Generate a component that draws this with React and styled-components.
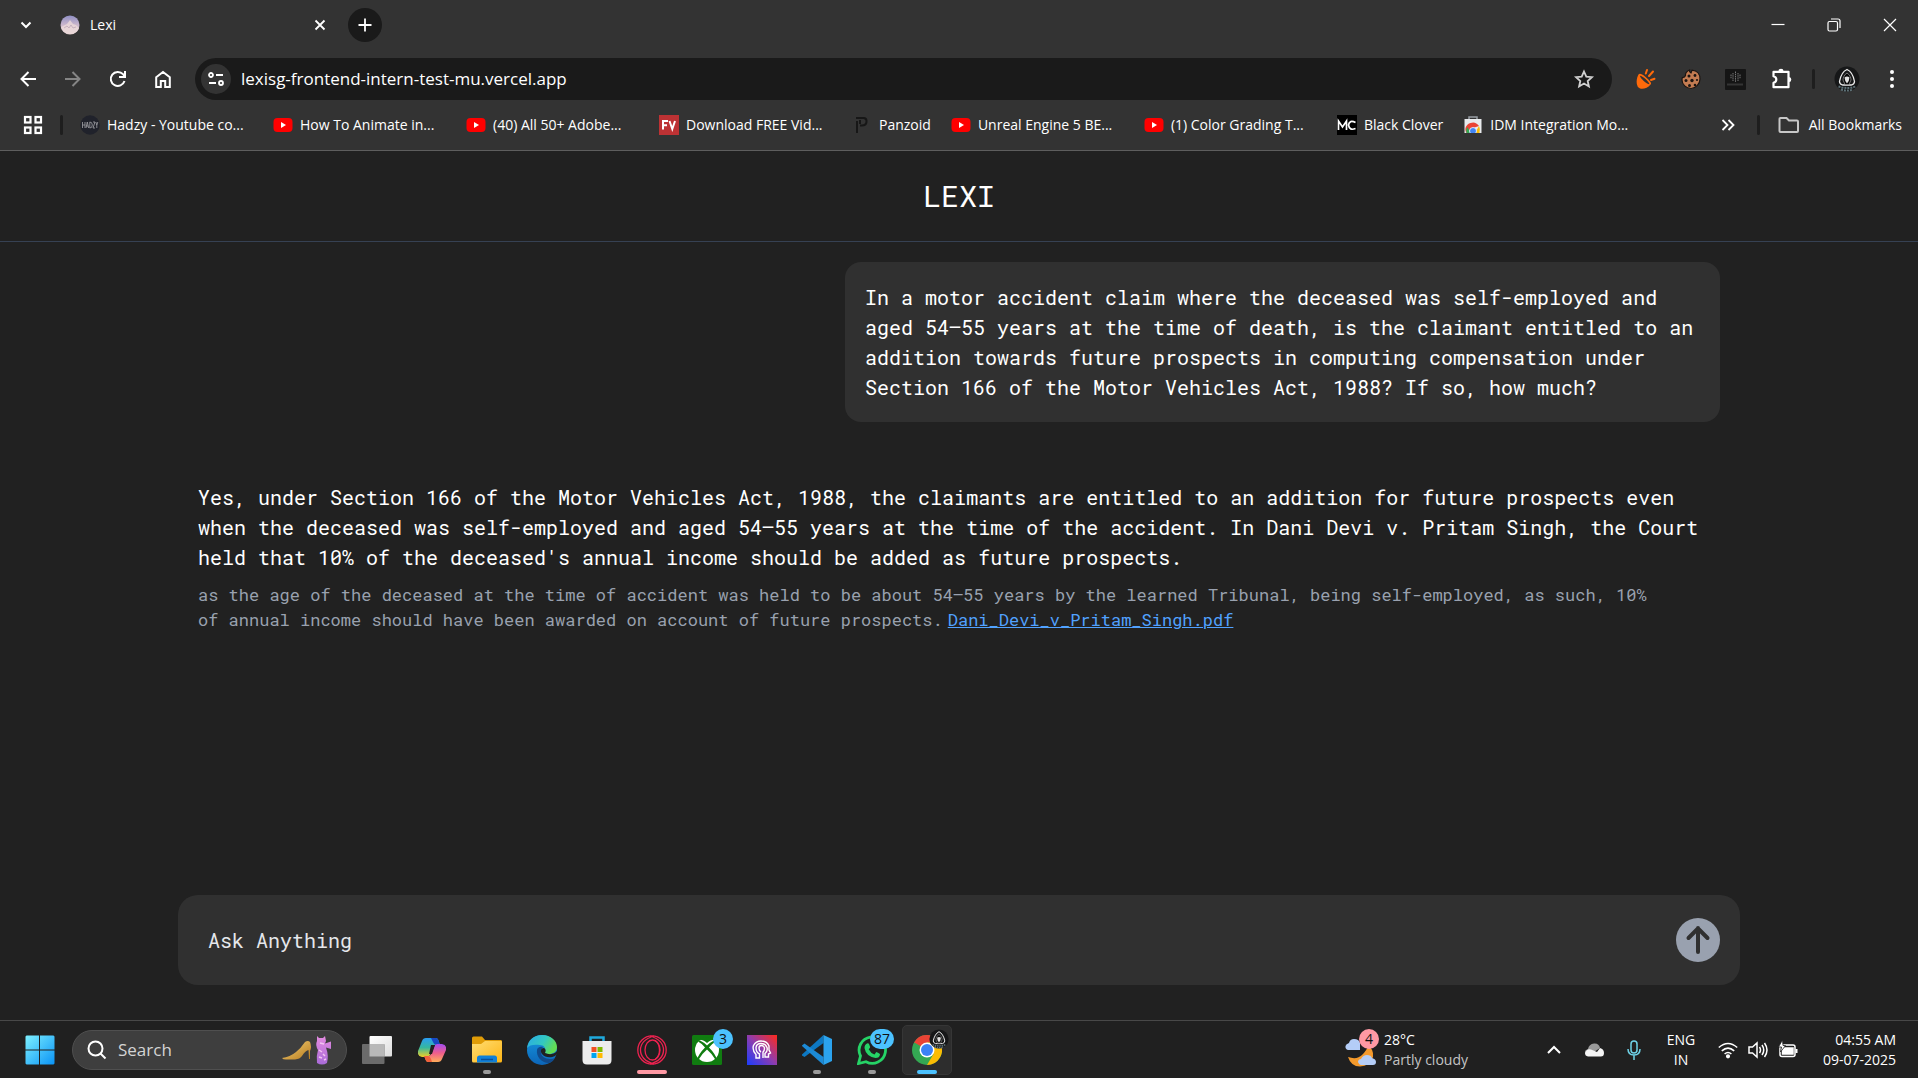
import React from "react";
import styled, { createGlobalStyle } from "styled-components";

const GlobalStyle = createGlobalStyle`
  *, *::before, *::after { box-sizing: border-box; }
  html, body { margin: 0; padding: 0; background: #212121; }
  button, input { font: inherit; color: inherit; }
`;

const ui = `"Segoe UI", "Open Sans", "Noto Sans", sans-serif`;
const mono = `"Roboto Mono", "DejaVu Sans Mono", "Liberation Mono", monospace`;

const Screen = styled.div`
  display: flex;
  flex-direction: column;
  min-height: 100vh;
  background: #212121;
  color: #fff;
  font-family: ${ui};
  font-size: 14px;
  line-height: 20px;
`;

/* ---------- browser chrome ---------- */

const Browser = styled.header`
  background: #333;
  border-bottom: 1px solid #5e5e5e;
  padding-bottom: 8px;
`;

const IconButton = styled.button`
  display: flex;
  align-items: center;
  justify-content: center;
  flex: none;
  width: ${(p) => p.$w || 45}px;
  height: ${(p) => p.$h || 34}px;
  padding: 0;
  border: 0;
  border-radius: 17px;
  background: ${(p) => p.$bg || "transparent"};
  color: ${(p) => p.$color || "#fff"};
`;

const TabStrip = styled.div`
  display: flex;
  align-items: center;
  height: 50px;
  padding-left: 4px;
`;

const Tab = styled.div`
  display: flex;
  align-items: center;
  gap: 10px;
  width: 300px;
  padding: 0 8px 0 12px;
`;

const TabTitle = styled.span`
  flex: 1;
`;

const WindowControls = styled.div`
  display: flex;
  margin-left: auto;
`;

const Toolbar = styled.div`
  display: flex;
  align-items: center;
  padding: 8px 4px 8px 5px;
`;

const AddressBar = styled.label`
  display: flex;
  align-items: center;
  flex: 1;
  height: 42px;
  margin: 0 11px 0 10px;
  padding: 0 6px;
  border-radius: 21px;
  background: #1a1a1a;
`;

const SiteInfo = styled.span`
  display: flex;
  align-items: center;
  justify-content: center;
  width: 30px;
  height: 30px;
  border-radius: 50%;
  background: #333;
`;

const AddressInput = styled.input`
  flex: 1;
  min-width: 0;
  padding: 0 0 0 10px;
  border: 0;
  outline: 0;
  background: none;
  font-size: 17px;
`;

const Divider = styled.span`
  flex: none;
  width: 3px;
  height: 20px;
  margin: 0 ${(p) => p.$gap}px;
  border-radius: 2px;
  background: #1e1e1e;
`;

const Bookmarks = styled.nav`
  display: flex;
  align-items: center;
  height: 34px;
  padding: 0 16px 0 10px;
`;

const BookmarkList = styled.div`
  display: flex;
  flex: 1;
  gap: 20px;
  margin-left: 12px;
`;

const Bookmark = styled.a`
  display: flex;
  align-items: center;
  gap: 7px;
  color: #fff;
  text-decoration: none;
  white-space: nowrap;
`;

const BookmarkTitle = styled.span`
  min-width: ${(p) => (p.$cut ? "146px" : "0")};
`;

/* ---------- page ---------- */

const Page = styled.main`
  display: flex;
  flex-direction: column;
  flex: 1;
  font-family: ${mono};
`;

const PageHeader = styled.div`
  display: flex;
  justify-content: center;
  padding: 22px 0 23px;
  border-bottom: 1px solid #364153;
`;

const Brand = styled.h1`
  margin: 0;
  font-size: 30px;
  font-weight: 400;
  line-height: 45px;
`;

const Conversation = styled.section`
  display: flex;
  flex-direction: column;
  flex: 1;
  gap: 60px;
  width: 100%;
  max-width: 1562px;
  margin: 0 auto;
  padding: 20px;
  font-size: 20px;
  line-height: 30px;
`;

const Question = styled.p`
  align-self: flex-end;
  max-width: 875px;
  margin: 0;
  padding: 20px;
  border-radius: 16px;
  background: #303030;
`;

const Answer = styled.article`
  display: flex;
  flex-direction: column;
  gap: 10px;
`;

const AnswerText = styled.p`
  margin: 0;
`;

const Citation = styled.p`
  max-width: 144ch;
  margin: 0;
  color: #99a1af;
  font-size: 17px;
  line-height: 25px;
`;

const CitationLink = styled.a`
  margin-left: 5px;
  color: #51a2ff;
  text-decoration: underline;
`;

const Composer = styled.form`
  display: flex;
  align-items: center;
  width: calc(100% - 40px);
  max-width: 1562px;
  height: 90px;
  margin: 0 auto 35px;
  padding: 0 20px 0 30px;
  border-radius: 20px;
  background: #303030;
`;

const Prompt = styled.input`
  flex: 1;
  min-width: 0;
  padding: 0;
  border: 0;
  outline: 0;
  background: none;
  font-size: 20px;
  line-height: 30px;
  &::placeholder { color: #e5e7eb; opacity: 1; }
`;

const SendButton = styled.button`
  display: flex;
  padding: 0;
  border: 0;
  border-radius: 50%;
  background: #99a1af;
`;

/* ---------- taskbar ---------- */

const Taskbar = styled.footer`
  display: flex;
  align-items: center;
  height: 58px;
  padding: 0 22px 0 15px;
  border-top: 1px solid #484848;
  background: #202020;
`;

const SearchBox = styled.label`
  display: flex;
  align-items: center;
  width: 275px;
  height: 40px;
  margin: 0 5px 0 7px;
  padding: 0 14px;
  border: 1px solid #4f4f4f;
  border-radius: 20px;
  background: #3e3e3e;
`;

const SearchInput = styled.input`
  flex: 1;
  min-width: 0;
  padding: 0 0 0 11px;
  border: 0;
  outline: 0;
  background: none;
  font-size: 17px;
  &::placeholder { color: #d4d4d4; opacity: 1; }
`;

const Apps = styled.div`
  display: flex;
  gap: 5px;
`;

const AppButton = styled.button`
  position: relative;
  display: flex;
  align-items: center;
  justify-content: center;
  width: 50px;
  height: 50px;
  padding: 0;
  border: 1px solid ${(p) => (p.$active ? "#363636" : "transparent")};
  border-radius: 5px;
  background: ${(p) => (p.$active ? "#2d2d2d" : "transparent")};
`;

const RunMark = styled.span`
  position: absolute;
  bottom: 0;
  left: 50%;
  width: ${(p) => p.$w}px;
  height: 4px;
  border-radius: 2px;
  background: ${(p) => p.$color};
  transform: translateX(-50%);
`;

const Badge = styled.span`
  position: absolute;
  top: ${(p) => p.$y || 3}px;
  left: ${(p) => p.$x}px;
  min-width: 20px;
  height: 20px;
  padding: 0 4px;
  border-radius: 10px;
  background: ${(p) => p.$bg || "#4cc2ff"};
  color: #111;
  font-size: 14px;
  line-height: 20px;
  text-align: center;
`;

const Weather = styled.button`
  position: relative;
  display: flex;
  align-items: center;
  gap: 5px;
  margin-left: auto;
  padding: 0;
  border: 0;
  background: none;
  text-align: left;
`;

const Stack = styled.span`
  display: flex;
  flex-direction: column;
  align-items: ${(p) => p.$align || "flex-start"};
  line-height: 20px;
  white-space: nowrap;
`;

const Muted = styled.span`
  color: #c4c4c4;
`;

const Tray = styled.div`
  display: flex;
  align-items: center;
  margin-left: 66px;
`;

const Language = styled.button`
  width: 54px;
  padding: 0;
  border: 0;
  background: none;
`;

const QuickSettings = styled.button`
  display: flex;
  gap: 10px;
  margin: 0 0 0 10px;
  padding: 0;
  border: 0;
  background: none;
`;

const Clock = styled.button`
  min-width: 98px;
  padding: 0;
  border: 0;
  background: none;
`;

/* ---------- drawings ---------- */

const Ico = ({ s = 20, h, vb = "0 0 24 24", w = 2, children }) => (
  <svg width={s} height={h || s} viewBox={vb} fill="none" stroke="currentColor" strokeWidth={w} aria-hidden="true">
    {children}
  </svg>
);

const YouTube = () => (
  <svg width="20" height="20" viewBox="0 0 20 20" aria-hidden="true">
    <rect x="0.5" y="3" width="19" height="14" rx="4" fill="#f00" />
    <path d="M8 7l5 3-5 3z" fill="#fff" />
  </svg>
);
const Hadzy = () => (
  <svg width="20" height="20" viewBox="0 0 20 20" aria-hidden="true">
    <circle cx="10" cy="10" r="9.7" fill="#20222b" />
    <g stroke="#a3a3a8" strokeWidth="0.8" fill="none">
      <path d="M2.500 7v6M5 7v6M2.500 10H5M6 13l1.300-6 1.300 6M6.500 11h1.700M9.800 7v6q2.500 0 2.500-3t-2.500-3M13 7h2l-2 6h2M15.800 7l1 3 1-3M16.800 10v3" />
    </g>
  </svg>
);
const Fv = () => (
  <svg width="20" height="20" viewBox="0 0 20 20" aria-hidden="true">
    <rect width="20" height="20" fill="#bd3234" />
    <path d="M4 14.500V6h5M4 10.200h4M10.500 6l2.800 8L16 6" stroke="#fff" strokeWidth="2" fill="none" />
  </svg>
);
const Panzoid = () => (
  <svg width="20" height="20" viewBox="0 0 20 20" aria-hidden="true">
    <path d="M5 18V6M4 3h8q3 .5 2.500 4T10 10.500H8M8 5v4" stroke="#171717" strokeWidth="2" fill="none" />
  </svg>
);
const Mc = () => (
  <svg width="20" height="20" viewBox="0 0 20 20" aria-hidden="true">
    <rect width="20" height="20" fill="#000" />
    <path d="M1.500 15V6l4 6 4-6v9M18.500 7.500q-6-3-7 2.500 1 6 7 3.500" stroke="#fff" strokeWidth="1.700" fill="none" />
  </svg>
);
const WebStore = () => (
  <svg width="20" height="20" viewBox="0 0 20 20" aria-hidden="true">
    <path d="M6 4V2h8v2" stroke="#9aa0a6" strokeWidth="1.500" fill="none" />
    <path d="M1.500 4h17v14h-17z" fill="#e8eaed" />
    <path d="M3.500 18a6.500 6.500 0 0 1 4-10q5-2 8.500 3l-6 2z" fill="#ea4335" />
    <path d="M3.500 18q-1-3 .7-6l4 6z" fill="#34a853" />
    <path d="M16 11q1.500 3 .5 7H12z" fill="#fbbc04" />
    <circle cx="10" cy="16" r="3.500" fill="#4285f4" stroke="#fff" strokeWidth=".8" />
    <rect x="2" y="18" width="16" height="2" fill="#333" />
  </svg>
);
const Hood = ({ s = 26 }) => (
  <svg width={s} height={s} viewBox="0 0 26 26" aria-hidden="true">
    <circle cx="13" cy="13" r="12.500" fill="#161718" />
    <path d="M13 3.500C9.500 5 6.500 10 5.500 15.500q0 2.500 3 3.500h9q3-1 3-3.500C19.500 10 16.500 5 13 3.500z" fill="none" stroke="#ececec" strokeWidth="1.300" />
    <path d="M13 7c-2.500 1.500-4 4.500-4 7l2 4.500h4l2-4.500c0-2.500-1.500-5.500-4-7z" fill="#050505" stroke="#8d8d8d" strokeWidth=".8" />
    <path d="M10.500 11.500q2.500-2 5 0l-.8 3.500-1.700 2.500-1.700-2.500z" fill="#e2e2e2" />
    <path d="M4.500 20.500q8.500 3 17 0M7 23.500q6 2 12 0" stroke="#5f7278" strokeWidth="2" strokeDasharray="2 1" fill="none" />
  </svg>
);
const LexiFavicon = () => (
  <svg width="20" height="20" viewBox="0 0 20 20" aria-hidden="true">
    <defs>
      <linearGradient id="sky" x1="0" y1="0" x2="0" y2="1">
        <stop offset="0" stopColor="#8f8fc4" />
        <stop offset=".5" stopColor="#cbb6cc" />
        <stop offset="1" stopColor="#e6d3d3" />
      </linearGradient>
    </defs>
    <circle cx="10" cy="10" r="9.500" fill="url(#sky)" />
    <path d="M1 12l4-2 2-1 3-4 3 4 3 1 3 3q-2 6-9 6T1 12z" fill="#ecd9da" opacity=".8" />
    <path d="M4 13l3-2 2 2 2-3 2 3 3-1" stroke="#b9a2b5" strokeWidth=".7" fill="none" />
  </svg>
);
const Carrot = () => (
  <svg width="22" height="24" viewBox="0 0 22 24" aria-hidden="true">
    <path d="M3.500 7.500C1 12 1 18 3.500 20.500s8.500 1.500 12.500-3.500c.5-2-3-5-6-7.500S4.500 6 3.500 7.500z" fill="#ff6a0a" />
    <path d="M4.800 8.800c2-.5 9.500 6 9.700 8.400-2.500.3-9.200-5.700-9.700-8.400z" fill="#333" />
    <path d="M10.800 6.500L12 3M14 9l4-4.500M16 13l3.500-1.200" stroke="#ff6a0a" strokeWidth="2" strokeLinecap="round" />
  </svg>
);
const Cookie = () => (
  <svg width="22" height="24" viewBox="0 0 22 24" aria-hidden="true">
    <path d="M9.500 3q-.5 2 1.500 3l1-2.800c5.500.3 8 4.300 8 8.800s-4 9.500-9 9.500-9-4-9-8.500q0-1 .3-2.300Q5 10.500 5.500 8.500 5 5 9.500 3z" fill="#c47c52" stroke="#1c1512" strokeWidth="1.200" />
    <g fill="#1c1512">
      <circle cx="9" cy="9" r="1.500" /><circle cx="15" cy="8.500" r="1.400" /><circle cx="6" cy="13.500" r="1.500" />
      <circle cx="12" cy="13.500" r="1.700" /><circle cx="17" cy="13" r="1.100" /><circle cx="9.500" cy="18.500" r="1.500" /><circle cx="15" cy="18" r="1.300" />
    </g>
  </svg>
);
const BlackBox = () => (
  <svg width="22" height="22" viewBox="0 0 22 22" aria-hidden="true">
    <rect y="1" width="21" height="21" rx="1" fill="#151515" />
    <path d="M10.500 3.500v11M8 5v8M13 5v8M6 6.500v4M15 6.500v4" stroke="#777" strokeWidth="1" strokeDasharray="1.500 .7" />
    <path d="M2.500 16.500h16" stroke="#555" strokeWidth="2" strokeDasharray="1 1" />
  </svg>
);
const Puzzle = () => (
  <Ico s={24} w={2.200}>
    <path d="M4.500 4.800h15v15.400h-15v-4.400q2.800-.8 2.800-3.300T4.500 9.200z" strokeLinejoin="round" />
    <path d="M9.500 4a2.500 2.300 0 0 1 5 0zM20 10a2.300 2.500 0 0 1 0 5z" fill="currentColor" stroke="none" />
  </Ico>
);

const Windows = () => (
  <svg width="30" height="30" viewBox="0 0 30 30" aria-hidden="true">
    <defs>
      <linearGradient id="win" x1="0" y1="0" x2="1" y2="1">
        <stop offset="0" stopColor="#7df0ff" /><stop offset="1" stopColor="#0a93f5" />
      </linearGradient>
    </defs>
    <path d="M1.500 .5H14v14H.5v-13zM15 .5h13.500l1 1v13H15zM.5 15.500H14v14H1.500l-1-1zM15 15.500h14.500v13l-1 1H15z" fill="url(#win)" />
  </svg>
);
const Fashion = () => (
  <svg width="50" height="32" viewBox="0 0 50 32" aria-hidden="true">
    <defs>
      <linearGradient id="shoe" x1="0" y1="0" x2="1" y2="1">
        <stop offset="0" stopColor="#f5d27a" /><stop offset="1" stopColor="#b77a1c" />
      </linearGradient>
      <linearGradient id="dress" x1="0" y1="0" x2="0" y2="1">
        <stop offset="0" stopColor="#e48be0" /><stop offset="1" stopColor="#a96bd8" />
      </linearGradient>
    </defs>
    <path d="M0 24q8-1 14-6 5-4 9-10 3-2 5 0 2 5 0 9v8h-1l-.5-9q-3.500 1-6.500 6-2 3-7 3.500H4q-3 0-4-1.500z" fill="url(#shoe)" />
    <path d="M35 2l2 2h4l2-2 1 5-1 2.500L49 7.500v7.500l-5-1.500q3 8.500 1 15.500-5 3-10 0-1-7 1-13-3-5-1-9z" fill="url(#dress)" />
    <path d="M37 16l3 2M41 20l2 2M37 23l3 1M42 26l2-1M38 9l4 1" stroke="#f3c4f2" strokeWidth="1.500" />
  </svg>
);
const TaskView = () => (
  <svg width="30" height="28" viewBox="0 0 30 28" aria-hidden="true">
    <defs>
      <linearGradient id="tv" x1="0" y1="0" x2="1" y2="1">
        <stop offset="0" stopColor="#fff" /><stop offset="1" stopColor="#ddd" />
      </linearGradient>
    </defs>
    <rect x="7.500" y="0" width="22.500" height="20.500" rx="1" fill="url(#tv)" />
    <rect x="0" y="8" width="22.500" height="20" rx="1" fill="#6b6b6b" />
    <path d="M7.500 8h15v12.500h-15z" fill="#b8b8b8" />
  </svg>
);
const Copilot = () => (
  <svg width="28" height="26" viewBox="0 0 28 26" aria-hidden="true">
    <defs>
      <linearGradient id="ca" x1="0" y1="0" x2="0" y2="1">
        <stop offset="0" stopColor="#2a9df4" /><stop offset=".5" stopColor="#35b8a0" /><stop offset="1" stopColor="#f0cf25" />
      </linearGradient>
      <linearGradient id="cb" x1="0" y1="0" x2="0" y2="1">
        <stop offset="0" stopColor="#a24cf0" /><stop offset=".5" stopColor="#ee5d8c" /><stop offset="1" stopColor="#ffae5a" />
      </linearGradient>
    </defs>
    <path d="M8 1h10q2 0 3 4l1 3h-4q-3 0-4 4l-2 6q-1 2-3 2H4q-5-1-4-6L4 4q1-3 4-3z" fill="url(#ca)" />
    <path d="M13 1h5q2 0 3 4l1 3h-4q-2 0-3-3z" fill="#1749c4" />
    <path d="M20 25H10q-2 0-3-4l-1-2h4q3 0 4-4l2-5q1-3 3-3h5q5 1 4 6l-4 9q-1 3-4 3z" fill="url(#cb)" />
    <path d="M14 25h-4q-2 0-3-4l-1-2h4q2 0 3 3z" fill="#f2603c" />
    <path d="M13 8h4l-3 9h-3z" fill="#212121" />
  </svg>
);
const Explorer = () => (
  <svg width="30" height="27" viewBox="0 0 30 27" aria-hidden="true">
    <defs>
      <linearGradient id="fold" x1="0" y1="0" x2="1" y2="1">
        <stop offset="0" stopColor="#ffdd73" /><stop offset="1" stopColor="#fdb515" />
      </linearGradient>
    </defs>
    <path d="M0 2Q0 .5 1.500.5H10l3 3.500h16q1 0 1 2v6H0z" fill="#e09c07" />
    <path d="M0 8h9l4-3h16q1 0 1 1v19q0 1.500-1.500 1.500h-27Q0 26.500 0 25z" fill="url(#fold)" />
    <path d="M5 26.500V22q0-2.500 2.500-2.500h15Q25 19.500 25 22v4.500z" fill="#1180d8" />
    <path d="M9 23.500h12" stroke="#0a4f9a" strokeWidth="1.500" />
  </svg>
);
const Edge = () => (
  <svg width="30" height="30" viewBox="0 0 30 30" aria-hidden="true">
    <defs>
      <linearGradient id="e1" x1="0" y1="0" x2="1" y2=".4">
        <stop offset="0" stopColor="#2aa9e8" /><stop offset=".6" stopColor="#33c8c0" /><stop offset="1" stopColor="#62dd55" />
      </linearGradient>
      <linearGradient id="e2" x1="0" y1="0" x2="0" y2="1">
        <stop offset="0" stopColor="#1798e0" /><stop offset="1" stopColor="#0c65b8" />
      </linearGradient>
    </defs>
    <circle cx="15" cy="15" r="15" fill="url(#e2)" />
    <path d="M0 13C1 5 7 0 15 0c9 0 15 6 15 12 0 5-4 7-8 7s-5-1-4-3c1-3-1-6-5-6-6-1-11 0-13 3z" fill="url(#e1)" />
    <path d="M10 15c-1 6 4 13 12 13q4-1 6-5c-5 2-14 1-14-6 0-2 1-4 2-5-3-1-6 1-6 3z" fill="#114a8b" />
    <path d="M17 13c-3 0-4 3-2 6 3 4 9 4 13 2l2-2v-3c-3 3.500-8 4-12 2 1-2 1-4-1-5z" fill="#202020" />
  </svg>
);
const Store = () => (
  <svg width="30" height="30" viewBox="0 0 30 30" aria-hidden="true">
    <path d="M8.500 7V2.500h13V7" stroke="#1fa9dc" strokeWidth="2.500" fill="none" />
    <path d="M.5 6h29v19q0 4.500-4.500 4.500H5Q.5 29.500.5 25z" fill="#ececec" />
    <path d="M9.500 12h5v5h-5z" fill="#f25022" /><path d="M15.500 12h5v5h-5z" fill="#7fba00" />
    <path d="M9.500 18h5v5h-5z" fill="#00a4ef" /><path d="M15.500 18h5v5h-5z" fill="#ffb900" />
  </svg>
);
const OperaGx = () => (
  <svg width="30" height="30" viewBox="0 0 30 30" fill="none" stroke="#ee2250" strokeWidth="1.300" aria-hidden="true">
    <circle cx="15" cy="15" r="14.200" />
    <ellipse cx="15.500" cy="15" rx="7.500" ry="10" />
    <path d="M17 1Q3.500 5 3.500 15T17 29M13 1q13.500 4 13.500 14T13 29M18 5.500q4.500 3 4.500 9.500T18 24.500" />
  </svg>
);
const Xbox = () => (
  <svg width="30" height="30" viewBox="0 0 30 30" aria-hidden="true">
    <rect width="30" height="30" rx="1.500" fill="#107c10" />
    <circle cx="15" cy="15" r="12" fill="#fff" />
    <path d="M7 5q3-1 8 3 5-4 8-3-3.500-3-8-3T7 5z" fill="#107c10" />
    <path d="M8 5.500Q13 8 15 10.500 17 8 22 5.500l2 1Q20 8.500 17 12.500q6 6 8 12l-1 1Q20 18.500 15 14.500 10 18.500 6 25.500l-1-1q2-6 8-12Q10 8.500 6 6.500z" fill="#107c10" />
  </svg>
);
const HeadApp = () => (
  <svg width="30" height="30" viewBox="0 0 30 30" aria-hidden="true">
    <defs>
      <linearGradient id="hd" x1="0" y1="1" x2="1" y2="0">
        <stop offset="0" stopColor="#1a3dff" /><stop offset=".5" stopColor="#8f3cae" /><stop offset="1" stopColor="#ff2a1a" />
      </linearGradient>
    </defs>
    <rect width="30" height="30" fill="url(#hd)" />
    <path d="M9 23v-3.500Q5 15 6.500 10.500 9 6 14 6q6 0 8 5v4l1.500 3-2 1v3H18v-3.500q3-2.500 2-6-1.500-4-6-4t-5 4q0 5 3.500 6.500V23zM12 13q0-2.500 2.500-2.500T17.500 13q0 3-1.500 4v6M12 13q0 3 2 4" fill="none" stroke="#fff" strokeWidth="1.400" />
  </svg>
);
const VsCode = () => (
  <svg width="30" height="30" viewBox="0 0 30 30" aria-hidden="true">
    <path d="M0 19.500L21.500 0v8L2.500 22 0 20.500z" fill="#0d78c2" />
    <path d="M0 10.500L2.500 8.500 21.500 22v8L0 11z" fill="#1c8ad6" />
    <path d="M21.500 0L30 4v22l-8.500 4z" fill="#2ba3ee" />
  </svg>
);
const WhatsApp = () => (
  <svg width="30" height="30" viewBox="0 0 30 30" aria-hidden="true">
    <path d="M1.500 28.500L3.500 21A13.200 13.200 0 1 1 9 26.700z" fill="none" stroke="#25d366" strokeWidth="2.800" />
    <path d="M10 8.500q1.500-.5 2 .5l1.200 3q0 1-1.500 2.300 2 4 5.800 5.200L19.300 17q4 1.500 3.700 2.500-.5 3.500-4.500 3.500Q9 21.500 7.500 13q0-3.500 2.500-4.500z" fill="#25d366" />
  </svg>
);
const Chrome = () => (
  <svg width="30" height="30" viewBox="0 0 30 30" aria-hidden="true">
    <circle cx="15" cy="15" r="15" fill="#34a853" />
    <path d="M15 15L2 7.500A15 15 0 0 1 28 7.500H15z" fill="#ea4335" />
    <path d="M15 7.500h13A15 15 0 0 1 15 30l6.500-11z" fill="#fbbc04" />
    <path d="M2 7.500l6.500 11.300L15 15z" fill="#34a853" />
    <circle cx="15" cy="15" r="7.500" fill="#fff" /><circle cx="15" cy="15" r="6" fill="#3b82f6" />
  </svg>
);
const WeatherIcon = () => (
  <svg width="34" height="36" viewBox="0 0 34 36" aria-hidden="true">
    <path d="M3 25q9 3 14-2 5-5 6-9 6 3 5 11-3 9-13 9.500-9 0-12-9.500z" fill="#f49a2c" />
    <path d="M3 18q-3-1-2.500-4Q1 12 4 11q1-4 5-4 5 0 6 4v7z" fill="#b4cdf7" />
    <path d="M16 33q-3-1-3-4 1-2 3-2 2-4 6-4t5 3q4 1 4 4t-3 3z" fill="#b4cdf7" />
  </svg>
);

const bookmarks = [
  { title: "Hadzy - Youtube co...", icon: <Hadzy />, cut: true },
  { title: "How To Animate in...", icon: <YouTube />, cut: true },
  { title: "(40) All 50+ Adobe...", icon: <YouTube />, cut: true },
  { title: "Download FREE Vid...", icon: <Fv />, cut: true },
  { title: "Panzoid", icon: <Panzoid /> },
  { title: "Unreal Engine 5 BE...", icon: <YouTube />, cut: true },
  { title: "(1) Color Grading T...", icon: <YouTube />, cut: true },
  { title: "Black Clover", icon: <Mc /> },
  { title: "IDM Integration Mo...", icon: <WebStore />, cut: true },
];

const apps = [
  { name: "Task view", icon: <TaskView /> },
  { name: "Copilot", icon: <Copilot /> },
  { name: "File Explorer", icon: <Explorer />, mark: 8 },
  { name: "Edge", icon: <Edge /> },
  { name: "Microsoft Store", icon: <Store /> },
  { name: "Opera GX", icon: <OperaGx />, mark: 30, color: "#ff99a4" },
  { name: "Xbox", icon: <Xbox />, badge: "3", badgeX: 30 },
  { name: "Assistant", icon: <HeadApp /> },
  { name: "Visual Studio Code", icon: <VsCode />, mark: 8 },
  { name: "WhatsApp", icon: <WhatsApp />, mark: 8, badge: "87", badgeX: 22 },
  { name: "Chrome", icon: <Chrome />, mark: 20, color: "#4cc2ff", active: true },
];

const ProfileMark = styled.span`
  position: absolute;
  top: 3px;
  right: 2px;
  display: flex;
`;

export default function App() {
  return (
    <Screen>
      <GlobalStyle />
      <Browser>
        <TabStrip>
          <IconButton $w={44} aria-label="Search tabs">
            <Ico s={12} vb="0 0 12 12"><path d="M1.500 3.500L6 8l4.500-4.500" /></Ico>
          </IconButton>
          <Tab>
            <LexiFavicon />
            <TabTitle>Lexi</TabTitle>
            <IconButton $w={40} aria-label="Close tab">
              <Ico s={12} vb="0 0 12 12" w={1.800}><path d="M1.500 1.500l9 9M10.500 1.500l-9 9" /></Ico>
            </IconButton>
          </Tab>
          <IconButton $w={34} $bg="#1a1a1a" aria-label="New tab">
            <Ico s={14} vb="0 0 14 14" w={1.800}><path d="M7 .5v13M.5 7h13" /></Ico>
          </IconButton>
          <WindowControls>
            <IconButton $w={56} aria-label="Minimize"><Ico s={14} vb="0 0 14 14" w={1.200}><path d="M.5 6.500h13" /></Ico></IconButton>
            <IconButton $w={56} aria-label="Restore">
              <Ico s={14} vb="0 0 14 14" w={1.200}><rect x="1" y="3.500" width="9.500" height="9.500" rx="1.500" /><path d="M4 1h7q2 0 2 2v7" /></Ico>
            </IconButton>
            <IconButton $w={56} aria-label="Close"><Ico s={14} vb="0 0 14 14" w={1.200}><path d="M1 1l12 12M13 1L1 13" /></Ico></IconButton>
          </WindowControls>
        </TabStrip>

        <Toolbar>
          <IconButton aria-label="Back"><Ico s={18} vb="0 0 18 18"><path d="M17 9H3M9.500 2L2.500 9l7 7" /></Ico></IconButton>
          <IconButton $color="#858585" aria-label="Forward"><Ico s={18} vb="0 0 18 18"><path d="M1 9h14M8.500 2l7 7-7 7" /></Ico></IconButton>
          <IconButton aria-label="Reload">
            <Ico s={18} vb="0 0 18 18"><path d="M15.500 11A7 7 0 1 1 14 4.200l1.500 1.800M16 1v6h-6" /></Ico>
          </IconButton>
          <IconButton aria-label="Home"><Ico s={18} vb="0 0 18 18"><path d="M2.200 7.200L9 2l6.800 5.200V17h-4.600v-6H6.800v6H2.200z" /></Ico></IconButton>
          <AddressBar>
            <SiteInfo>
              <Ico s={18} vb="0 0 18 18" w={1.800}><circle cx="4" cy="5" r="2" /><path d="M9 5h7M2 13h7" /><circle cx="14" cy="13" r="2" /></Ico>
            </SiteInfo>
            <AddressInput aria-label="Address" defaultValue="lexisg-frontend-intern-test-mu.vercel.app" />
            <Ico s={44} h={20} vb="-12 0 44 20" w={1.800}>
              <path stroke="#d0d0d0" d="M10 2.500l2.300 5.200 5.600.5-4.200 3.800 1.200 5.500L10 14.600l-4.900 2.900L6.300 12 2.100 8.200l5.600-.5z" />
            </Ico>
          </AddressBar>
          <IconButton aria-label="Carrot extension"><Carrot /></IconButton>
          <IconButton aria-label="Cookie extension"><Cookie /></IconButton>
          <IconButton aria-label="Blackbox extension"><BlackBox /></IconButton>
          <IconButton aria-label="Extensions"><Puzzle /></IconButton>
          <Divider $gap={9} />
          <IconButton aria-label="Profile"><Hood /></IconButton>
          <IconButton aria-label="Menu">
            <svg width="6" height="22" viewBox="0 0 6 22" fill="#fff" aria-hidden="true"><circle cx="3" cy="4" r="2" /><circle cx="3" cy="11" r="2" /><circle cx="3" cy="18" r="2" /></svg>
          </IconButton>
        </Toolbar>

        <Bookmarks>
          <IconButton aria-label="Apps">
            <Ico s={20} vb="0 0 20 20" w={2.200}>
              <rect x="2" y="2" width="5.500" height="5.500" /><rect x="12.500" y="2" width="5.500" height="5.500" />
              <rect x="2" y="12.500" width="5.500" height="5.500" /><rect x="12.500" y="12.500" width="5.500" height="5.500" />
            </Ico>
          </IconButton>
          <Divider $gap={5} />
          <BookmarkList>
            {bookmarks.map((b) => (
              <Bookmark href="#" key={b.title}>
                {b.icon}
                <BookmarkTitle $cut={b.cut}>{b.title}</BookmarkTitle>
              </Bookmark>
            ))}
          </BookmarkList>
          <IconButton aria-label="More bookmarks">
            <Ico s={14} vb="0 0 14 14" w={1.800}><path d="M1.500 2l5 5-5 5M7.500 2l5 5-5 5" /></Ico>
          </IconButton>
          <Divider $gap={6} />
          <Bookmark href="#">
            <Ico s={36} h={20} vb="-12 0 36 20"><path stroke="#c7c7c7" d="M1.500 16V4q0-1 1-1h6l2.500 2.500h8q1 0 1 1V16q0 1-1 1h-16.500q-1 0-1-1z" /></Ico>
            All Bookmarks
          </Bookmark>
        </Bookmarks>
      </Browser>

      <Page>
        <PageHeader><Brand>LEXI</Brand></PageHeader>
        <Conversation>
          <Question>
            In a motor accident claim where the deceased was self-employed and aged 54–55 years at the time of death, is
            the claimant entitled to an addition towards future prospects in computing compensation under Section 166 of
            the Motor Vehicles Act, 1988? If so, how much?
          </Question>
          <Answer>
            <AnswerText>
              Yes, under Section 166 of the Motor Vehicles Act, 1988, the claimants are entitled to an addition for future
              prospects even when the deceased was self-employed and aged 54–55 years at the time of the accident. In Dani
              Devi v. Pritam Singh, the Court held that 10% of the deceased's annual income should be added as future
              prospects.
            </AnswerText>
            <Citation>
              as the age of the deceased at the time of accident was held to be about 54–55 years by the learned Tribunal,
              being self-employed, as such, 10% of annual income should have been awarded on account of future prospects.
              <CitationLink href="#">Dani_Devi_v_Pritam_Singh.pdf</CitationLink>
            </Citation>
          </Answer>
        </Conversation>
        <Composer onSubmit={(e) => e.preventDefault()}>
          <Prompt aria-label="Ask Anything" placeholder="Ask Anything" />
          <SendButton aria-label="Send">
            <Ico s={44} vb="0 0 44 44" w={4}><path stroke="#303030" strokeLinecap="round" strokeLinejoin="round" d="M22 34V10M12.500 20L22 10.500 31.500 20" /></Ico>
          </SendButton>
        </Composer>
      </Page>

      <Taskbar>
        <AppButton aria-label="Start"><Windows /></AppButton>
        <SearchBox>
          <Ico s={20} vb="0 0 20 20"><circle cx="8.500" cy="8.500" r="7" /><path d="M13.500 13.500l5 5" /></Ico>
          <SearchInput aria-label="Search" placeholder="Search" />
          <Fashion />
        </SearchBox>
        <Apps>
          {apps.map((a) => (
            <AppButton key={a.name} aria-label={a.name} $active={a.active}>
              {a.icon}
              {a.mark && <RunMark $w={a.mark} $color={a.color || "#9a9a9a"} />}
              {a.badge && <Badge $x={a.badgeX}>{a.badge}</Badge>}
              {a.active && <ProfileMark><Hood s={20} /></ProfileMark>}
            </AppButton>
          ))}
        </Apps>
        <Weather>
          <WeatherIcon />
          <Badge $x={14} $bg="#ff99a4" $y={-1}>4</Badge>
          <Stack><span>28°C</span><Muted>Partly cloudy</Muted></Stack>
        </Weather>
        <Tray>
          <IconButton $w={40} aria-label="Show hidden icons"><Ico s={14} vb="0 0 14 14"><path d="M1 10l6-6 6 6" /></Ico></IconButton>
          <IconButton $w={40} aria-label="OneDrive">
            <svg width="20" height="14" viewBox="0 0 20 14" aria-hidden="true">
              <path d="M4 6q1-5 6-5.500T16 5l-6 4-8 2q-3-3 2-5z" fill="#9a9a9a" />
              <path d="M1 10q2-5 6-3.500L13 9l3-4q4 1 4 5t-4 3.500H4Q1 13 1 10z" fill="#f4f4f4" />
            </svg>
          </IconButton>
          <IconButton $w={40} $color="#6fd3e8" aria-label="Microphone">
            <Ico s={14} h={20} vb="0 0 14 20" w={1.500}><rect x="4" y="1" width="6" height="12" rx="3" /><path d="M1 9q0 6 6 6t6-6M7 15v5" /></Ico>
          </IconButton>
          <Language><Stack $align="center"><span>ENG</span><span>IN</span></Stack></Language>
          <QuickSettings aria-label="Network, volume and battery">
            <Ico s={20} vb="0 0 20 20" w={1.600}>
              <path d="M.8 7.500q9.200-8 18.400 0M3.800 10.800q6.200-5.500 12.400 0M6.600 14q3.400-3 6.800 0" /><circle cx="10" cy="16.300" r="1.300" fill="currentColor" />
            </Ico>
            <Ico s={20} vb="0 0 20 20" w={1.500}>
              <path d="M1 7h3.500L9 3v14l-4.500-4H1zM11.500 7q2 3 0 6M14 5q3.500 5 0 10M16.500 3q5 7 0 14" />
            </Ico>
            <Ico s={20} vb="0 0 20 20" w={1.500}>
              <rect x="2" y="5" width="15" height="11.500" rx="2" /><path d="M4.500 8h10.500v6H4.500z" fill="currentColor" /><path d="M18.500 9v4" strokeWidth="2" />
              <path d="M4.500 0L.5 7h3l-1 5 5-6.500H5z" fill="#fff" stroke="#202020" strokeWidth=".8" />
            </Ico>
          </QuickSettings>
          <Clock><Stack $align="flex-end"><span>04:55 AM</span><span>09-07-2025</span></Stack></Clock>
        </Tray>
      </Taskbar>
    </Screen>
  );
}
